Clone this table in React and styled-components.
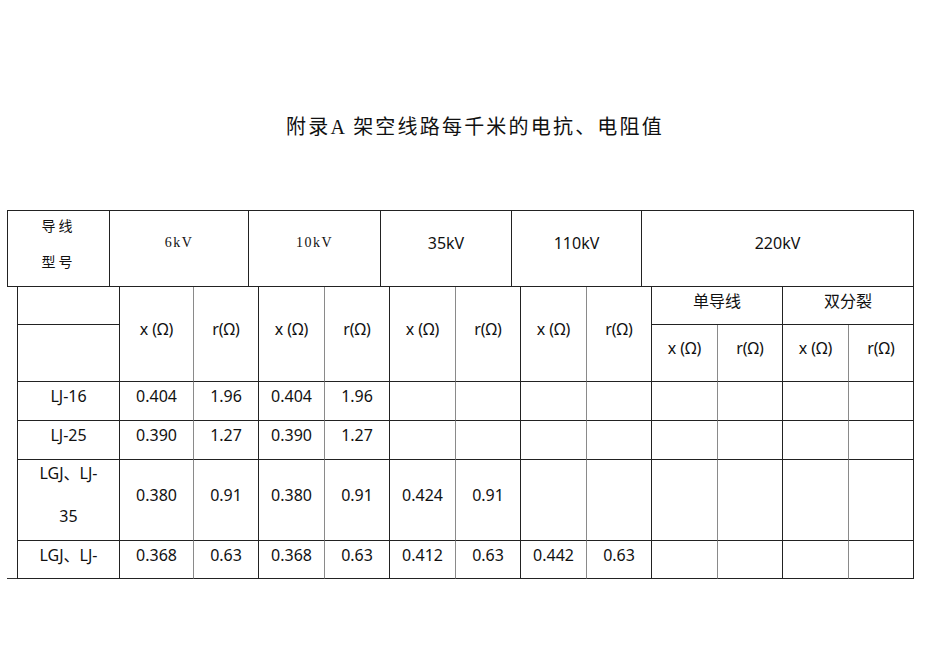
import styled, { createGlobalStyle } from "styled-components";

const GlobalStyle = createGlobalStyle`
  * { box-sizing: border-box; }
  body {
    margin: 0;
    background: #fff;
    color: #000;
    font-family: "Noto Sans", "Noto Sans CJK SC", sans-serif;
  }
`;

const SERIF = `"Liberation Serif", "Noto Sans CJK SC", serif`;
const LINE = "#222";
const GRAY = "#8a8a8a";

const Page = styled.div`
  width: 950px;
  min-height: 671px;
  padding: 113px 0 0 7px;
`;

const Title = styled.h1`
  margin: 0 0 69px -7px;
  font-family: ${SERIF};
  font-weight: normal;
  font-size: 20px;
  line-height: 28px;
  letter-spacing: 2.2px;
  text-align: center;
  color: #111;
`;

const Grid = styled.div`
  display: grid;
  grid-template-columns: ${(p) => p.$cols};
  grid-template-rows: ${(p) => p.$rows};
  border-left: 1px solid ${LINE};
  border-top: ${(p) => (p.$top ? `1px solid ${LINE}` : "none")};
`;

const Cell = styled.div`
  display: flex;
  flex-direction: column;
  align-items: center;
  justify-content: center;
  padding-bottom: ${(p) => p.$pb ?? 10}px;
  border-right: 1px solid ${(p) => (p.$gray ? GRAY : LINE)};
  border-bottom: 1px solid ${LINE};
  grid-column: span ${(p) => p.$span || 1};
  grid-row: span ${(p) => p.$rowSpan || 1};
  font-size: 16px;
  line-height: 20px;
  text-align: center;
  white-space: nowrap;
  color: #111;
`;

const SerifLabel = styled.span`
  font-family: ${SERIF};
  font-size: ${(p) => p.$size || 14}px;
  letter-spacing: ${(p) => p.$ls ?? 3}px;
  line-height: 36px;
  color: #111;
`;

const TwoLine = styled.span`
  line-height: 43px;
`;

const BodyRow = styled.div`
  display: flex;
  align-items: flex-end;
`;

const Stub = styled.div`
  flex: 0 0 10px;
  height: 1px;
  background: #333;
`;

const headCols = "102px 139px 132px 131px 130px 272px";
const bodyCols = "102px 74px 65px 66px 65px 66px 65px 66px 65px 66px 65px 66px 65px";
const bodyRows = "38px 57px 39px 39px 81px 38px";

const rows = [
  { name: "LJ-16", vals: ["0.404", "1.96", "0.404", "1.96"] },
  { name: "LJ-25", vals: ["0.390", "1.27", "0.390", "1.27"] },
  { name: ["LGJ、LJ-", "35"], vals: ["0.380", "0.91", "0.380", "0.91", "0.424", "0.91"] },
  { name: "LGJ、LJ-", vals: ["0.368", "0.63", "0.368", "0.63", "0.412", "0.63", "0.442", "0.63"] },
];

const App = () => {
  return (
    <Page>
      <GlobalStyle />
      <Title>附录A 架空线路每千米的电抗、电阻值</Title>

      <Grid $cols={headCols} $rows="76px" $top style={{ width: 907 }}>
        <Cell $pb={8}>
          <SerifLabel>导线</SerifLabel>
          <SerifLabel>型号</SerifLabel>
        </Cell>
        <Cell $pb={12}>
          <SerifLabel $size={14} $ls={1.5}>6kV</SerifLabel>
        </Cell>
        <Cell $pb={12}>
          <SerifLabel $size={14} $ls={1.5}>10kV</SerifLabel>
        </Cell>
        <Cell $pb={12}>35kV</Cell>
        <Cell $pb={12}>110kV</Cell>
        <Cell $pb={12}>220kV</Cell>
      </Grid>

      <BodyRow>
        <Stub />
        <Grid $cols={bodyCols} $rows={bodyRows}>
          <Cell />
          {[0, 1, 2, 3].map((i) => [
            <Cell key={`x${i}`} $rowSpan={2} $gray>x (Ω)</Cell>,
            <Cell key={`r${i}`} $rowSpan={2}>r(Ω)</Cell>,
          ])}
          <Cell $span={2}>单导线</Cell>
          <Cell $span={2}>双分裂</Cell>
          <Cell />
          {[0, 1].map((i) => [
            <Cell key={`sx${i}`} $gray>x (Ω)</Cell>,
            <Cell key={`sr${i}`}>r(Ω)</Cell>,
          ])}

          {rows.map((row, ri) => {
            const cells = [];
            for (let c = 0; c < 12; c++) {
              cells.push(
                <Cell key={c} $gray={c % 2 === 0}>
                  {row.vals[c] || ""}
                </Cell>
              );
            }
            return [
              <Cell key={`n${ri}`}>
                {Array.isArray(row.name) ? (
                  <>
                    <TwoLine>{row.name[0]}</TwoLine>
                    <TwoLine>{row.name[1]}</TwoLine>
                  </>
                ) : (
                  row.name
                )}
              </Cell>,
              ...cells,
            ];
          })}
        </Grid>
      </BodyRow>
    </Page>
  );
};

export default App;
